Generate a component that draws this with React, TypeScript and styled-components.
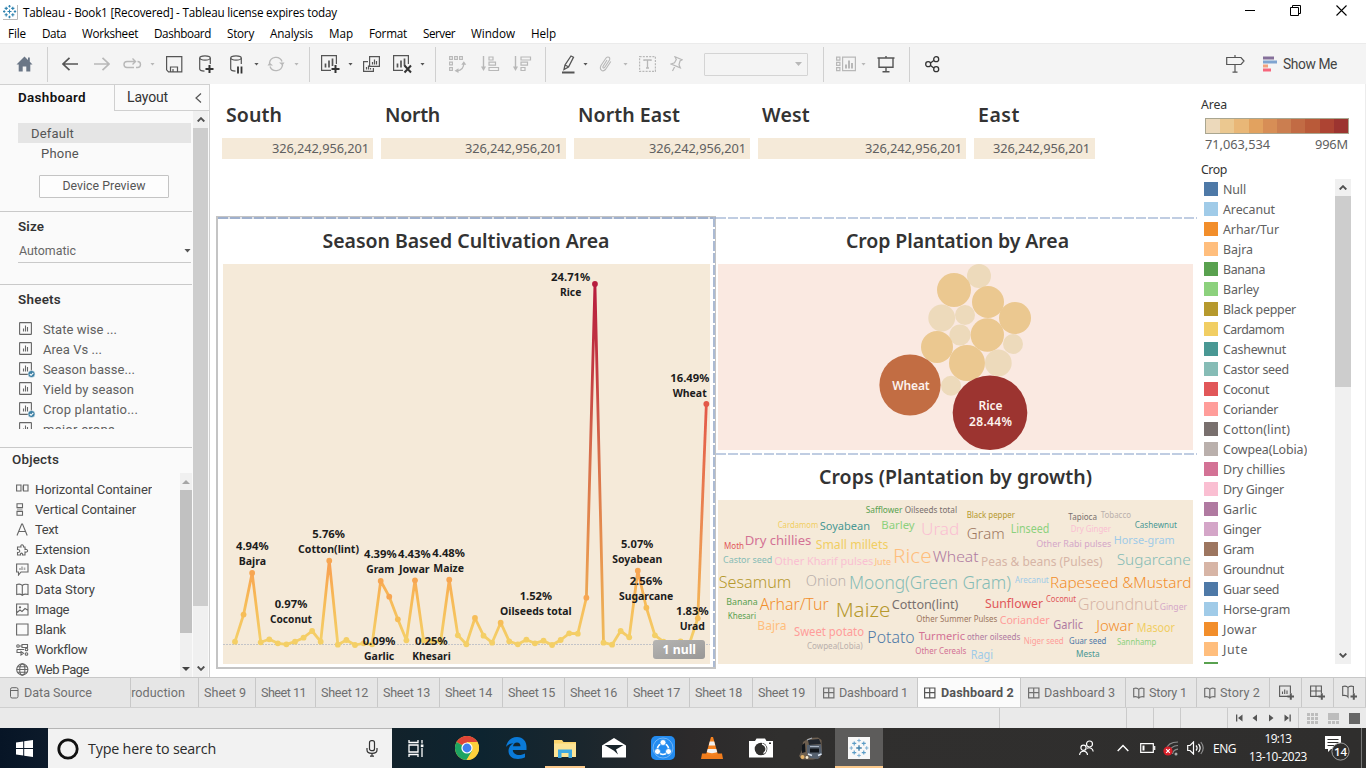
import React, { useLayoutEffect, useRef, useState } from 'react';
import styled, { createGlobalStyle } from 'styled-components';

const winFont = `"Open Sans", "Noto Sans", sans-serif`;
const uiFont = `Roboto, "Noto Sans", sans-serif`;
const vizFont = `"Noto Sans", "Open Sans", sans-serif`;

const GlobalStyle = createGlobalStyle`
  * { box-sizing: border-box; }
  html, body { margin: 0; padding: 0; overflow: hidden; background: #fff; }
  svg { display: block; flex: none; }
`;

/* ---------- text that keeps a fixed advance width ---------- */
const Run = styled.span`
  display: inline-block;
  white-space: pre;
  flex: none;
`;

function Fit({ w, children }: { w: number; children: string }) {
  const ref = useRef<HTMLSpanElement>(null);
  const [spacing, setSpacing] = useState(0);
  useLayoutEffect(() => {
    const el = ref.current;
    if (!el) return;
    const natural = el.getBoundingClientRect().width;
    setSpacing((w - natural) / children.length);
  }, [w, children]);
  return (
    <Run ref={ref} style={{ letterSpacing: `${spacing}px` }}>
      {children}
    </Run>
  );
}

/* ---------- window frame ---------- */
const Page = styled.div`
  width: 1366px;
  height: 768px;
  display: flex;
  flex-direction: column;
  overflow: hidden;
  background: #fff;
  font-family: ${uiFont};
  color: #333;
`;

const TitleBar = styled.header`
  height: 24px;
  flex: none;
  display: flex;
  align-items: center;
  padding-left: 3px;
  font: 11.7px/24px ${winFont};
  color: #000;
`;
const TitleText = styled.div`
  margin-left: 5px;
  flex: 1;
`;
const WindowButtons = styled.div`
  display: flex;
  gap: 34.5px;
  margin-right: 19.5px;
  margin-top: -4px;
`;
const MenuBar = styled.nav`
  height: 19px;
  flex: none;
  display: flex;
  gap: 16px;
  padding-left: 8px;
  font: 11.7px/19px ${winFont};
  color: #000;
`;

/* ---------- toolbar ---------- */
const Toolbar = styled.div`
  height: 41px;
  flex: none;
  display: flex;
  align-items: center;
  background: #f4f4f4;
  border-top: 1px solid #ebebeb;
`;
const Tool = styled.div<{ $ml?: number; $w: number; $dim?: boolean }>`
  margin-left: ${(p) => p.$ml ?? 0}px;
  width: ${(p) => p.$w}px;
  height: 20px;
  flex: none;
  display: flex;
  align-items: center;
  color: ${(p) => (p.$dim ? '#b8b8b8' : '#555')};
`;
const ToolCaret = styled.i<{ $ml: number; $dim?: boolean; $big?: boolean }>`
  margin-left: ${(p) => p.$ml}px;
  width: ${(p) => (p.$big ? 7 : 5)}px;
  height: ${(p) => (p.$big ? 4 : 3)}px;
  flex: none;
  background: ${(p) => (p.$dim ? '#b8b8b8' : '#555')};
  clip-path: polygon(0 0, 100% 0, 50% 100%);
`;
const ToolRule = styled.i<{ $ml: number }>`
  margin-left: ${(p) => p.$ml}px;
  width: 1px;
  height: 35px;
  flex: none;
  background: #d0d0d0;
`;
const ToolSelect = styled.div`
  margin-left: 21px;
  width: 104px;
  height: 23px;
  flex: none;
  border: 1px solid #d4d4d4;
  border-radius: 1px;
  display: flex;
  align-items: center;
`;
const ShowMe = styled.div`
  margin-left: 18px;
  display: flex;
  align-items: center;
  gap: 6px;
  font: 13.8px/20px ${uiFont};
  color: #444;
`;

/* ---------- sidebar ---------- */
const Body = styled.div`
  height: 593px;
  flex: none;
  display: flex;
`;
const Sidebar = styled.aside`
  width: 210px;
  flex: none;
  display: flex;
  flex-direction: column;
  background: #fafafa;
  border-top: 1px solid #d0d0d0;
  border-right: 1px solid #d0d0d0;
`;
const PaneTabs = styled.div`
  height: 26px;
  flex: none;
  display: flex;
  font-size: 14px;
  line-height: 25px;
`;
const PaneTabActive = styled.div`
  width: 114px;
  padding-left: 18px;
  font-weight: 600;
  font-size: 13.4px;
  color: #111;
`;
const PaneTab = styled.div`
  flex: 1;
  display: flex;
  align-items: center;
  justify-content: space-between;
  padding: 0 7px 0 12px;
  border-left: 1px solid #d0d0d0;
  border-bottom: 1px solid #d0d0d0;
`;
const PaneRow = styled.div`
  flex: 1;
  min-height: 0;
  display: flex;
`;
const Pane = styled.div`
  width: 192px;
  margin-right: 1px;
  display: flex;
  flex-direction: column;
  font-size: 13px;
  color: #555;
`;
const Section = styled.section<{ $h: number }>`
  height: ${(p) => p.$h}px;
  flex: none;
  padding-left: 18px;
  border-bottom: 1px solid #c9c9c9;
  overflow: hidden;
`;
const DeviceItem = styled.div<{ $on?: boolean }>`
  width: 173px;
  height: 20px;
  line-height: 21px;
  margin-top: ${(p) => (p.$on ? 12 : 0)}px;
  padding-left: ${(p) => (p.$on ? 13 : 23)}px;
  background: ${(p) => (p.$on ? '#e5e5e5' : 'transparent')};
`;
const PreviewButton = styled.div`
  width: 130px;
  height: 23px;
  margin: 12px 0 0 21px;
  border: 1px solid #c4c4c4;
  border-radius: 1px;
  background: #fdfdfd;
  text-align: center;
  font-size: 12.3px;
  line-height: 21px;
`;
const Heading = styled.h3<{ $plain?: boolean }>`
  margin: 0;
  font-size: 13.4px;
  font-weight: ${(p) => (p.$plain ? 500 : 600)};
  line-height: 30px;
  color: #333;
`;
const SizeSelect = styled.div`
  width: 173px;
  height: 21px;
  display: flex;
  align-items: center;
  justify-content: space-between;
  padding-left: 1px;
  padding-bottom: 3px;
  border-bottom: 1px solid #c9c9c9;
  font-size: 12.4px;
  color: #666;
`;
const SheetItem = styled.div`
  height: 20px;
  display: flex;
  align-items: center;
  gap: 7px;
  font-size: 13px;
  color: #606060;
`;
const SheetClip = styled.div`
  height: 110px;
  margin-top: 4px;
  overflow: hidden;
`;
const ObjectsHead = styled.div`
  height: 25px;
  flex: none;
  padding-left: 12px;
  margin-top: -3px;
  margin-bottom: 3px;
`;
const ObjectsSection = styled.section`
  flex: 1;
  min-height: 0;
  display: flex;
  flex-direction: column;
`;
const ObjectsBody = styled.div`
  flex: 1;
  min-height: 0;
  display: flex;
  justify-content: space-between;
`;
const ObjectList = styled.div`
  padding: 6px 0 0 15px;
  overflow: hidden;
  color: #444;
`;
const ObjectItem = styled.div`
  height: 20px;
  display: flex;
  align-items: center;
  gap: 6px;
  font-size: 13px;
`;
const Track = styled.div<{ $w: number }>`
  width: ${(p) => p.$w}px;
  flex: none;
  display: flex;
  flex-direction: column;
  align-items: center;
  background: #f0f0f0;
`;
const Thumb = styled.div<{ $h: number; $c?: string }>`
  width: 100%;
  height: ${(p) => p.$h}px;
  flex: none;
  background: ${(p) => p.$c ?? '#cdcdcd'};
`;
const TrackEnd = styled.div<{ $last?: boolean }>`
  width: 100%;
  height: 17px;
  flex: none;
  margin-top: ${(p) => (p.$last ? 'auto' : 0)};
  display: flex;
  align-items: center;
  justify-content: center;
`;

/* ---------- dashboard ---------- */
const Canvas = styled.main`
  width: 987px;
  flex: none;
  display: flex;
  flex-direction: column;
`;
const Regions = styled.div`
  height: 132px;
  flex: none;
  display: flex;
  gap: 8px;
  padding-left: 12px;
`;
const Region = styled.section<{ $w: number }>`
  width: ${(p) => p.$w}px;
  flex: none;
`;
const VizTitle = styled.h2`
  margin: 0;
  font: 600 19.5px/30px ${vizFont};
  color: #333;
`;
const RegionTitle = styled(VizTitle)`
  height: 54px;
  padding: 16px 0 0 4px;
`;
const RegionValue = styled.div<{ $pr: number }>`
  height: 21px;
  background: #f5ead9;
  padding-right: ${(p) => p.$pr}px;
  text-align: right;
  font: 12.8px/21px ${vizFont};
  color: #606060;
`;
const Zones = styled.div`
  display: flex;
  padding-left: 6px;
`;
const SelectedZone = styled.section`
  position: relative;
  width: 500px;
  height: 453px;
  flex: none;
  border: 2px solid #c4c4c4;
  padding-left: 5px;
`;
const GuideTop = styled.i`
  position: absolute;
  left: 0;
  right: -2px;
  top: -1px;
  height: 2px;
  background: repeating-linear-gradient(90deg, #9fb0cd 0 10px, #dfe3ea 10px 12px);
`;
const GuideSide = styled.i`
  position: absolute;
  right: -1px;
  top: -1px;
  bottom: 0;
  width: 2px;
  background: repeating-linear-gradient(180deg, #abbad3 0 10px, #fff 10px 12px);
`;
const ZoneTitle = styled(VizTitle)<{ $h: number; $pr?: number; $pl?: number }>`
  height: ${(p) => p.$h}px;
  padding: 0 ${(p) => p.$pr ?? 0}px 0 ${(p) => p.$pl ?? 0}px;
  text-align: center;
  line-height: ${(p) => (p.$h === 46 ? 45 : 43)}px;
`;
const ZoneColumn = styled.div`
  width: 481px;
  padding-top: 1px;
`;
const DashRule = styled.div`
  height: 2px;
  background: repeating-linear-gradient(90deg, #c0cde2 0 10px, #fff 10px 12px);
`;
const Panel = styled.div<{ $bg: string; $h: number; $mb?: number }>`
  width: 475px;
  height: ${(p) => p.$h}px;
  margin: 0 0 ${(p) => p.$mb ?? 0}px 2px;
  background: ${(p) => p.$bg};
`;

/* ---------- legends ---------- */
const Legends = styled.aside`
  width: 169px;
  flex: none;
  padding: 11px 0 13px 4px;
  border-right: 1px solid #ececec;
  display: flex;
  flex-direction: column;
  font-family: ${vizFont};
  color: #606060;
`;
const LegendTitle = styled.div`
  font-size: 12.3px;
  line-height: 20px;
  height: 23px;
  color: #333;
`;
const Ramp = styled.div`
  width: 144px;
  height: 16px;
  margin-left: 4px;
  border: 1px solid #a9a690;
  display: flex;
  flex: none;
`;
const RampStep = styled.i<{ $c: string }>`
  flex: 1;
  background: ${(p) => p.$c};
`;
const RampEnds = styled.div`
  width: 143px;
  margin: 0 0 6px 4px;
  display: flex;
  justify-content: space-between;
  font-size: 12.8px;
  line-height: 20px;
`;
const CropLegend = styled.div`
  height: 485px;
  margin-top: -4px;
  display: flex;
  justify-content: space-between;
  padding-right: 14px;
  flex: none;
`;
const CropList = styled.div`
  overflow: hidden;
  padding-left: 3px;
`;
const CropItem = styled.div`
  height: 20px;
  display: flex;
  align-items: center;
  gap: 5px;
  font-size: 12.4px;
`;
const Swatch = styled.i<{ $c: string }>`
  width: 14px;
  height: 14px;
  background: ${(p) => p.$c};
`;

/* ---------- sheet tabs and status bar ---------- */
const SheetTabs = styled.div`
  height: 31px;
  flex: none;
  display: flex;
  background: #e6e6e6;
  border-top: 1px solid #c8c8c8;
  border-bottom: 1px solid #cfcfcf;
`;
const SheetTab = styled.div<{ $w: number; $on?: boolean; $pl?: number; $gap?: number }>`
  width: ${(p) => p.$w}px;
  flex: none;
  overflow: hidden;
  display: flex;
  align-items: center;
  gap: ${(p) => p.$gap ?? 5}px;
  padding-left: ${(p) => p.$pl ?? 5}px;
  border-right: 1px solid #c8c8c8;
  background: ${(p) => (p.$on ? '#fbfbfb' : 'transparent')};
  font-size: 12.6px;
  font-weight: ${(p) => (p.$on ? 700 : 400)};
  color: ${(p) => (p.$on ? '#555' : '#707070')};
`;
const Clipped = styled.div`
  margin-left: -7px;
`;
const StatusBar = styled.div`
  height: 20px;
  flex: none;
  display: flex;
  justify-content: flex-end;
  background: #eaeaea;
`;
const StatusCell = styled.div<{ $w: number; $pl?: number; $gap?: number }>`
  width: ${(p) => p.$w}px;
  padding-left: ${(p) => p.$pl ?? 0}px;
  border-left: 1px solid #cbcbcb;
  display: flex;
  align-items: center;
  gap: ${(p) => p.$gap ?? 0}px;
`;

/* ---------- taskbar ---------- */
const Taskbar = styled.footer`
  height: 40px;
  flex: none;
  display: flex;
  background: linear-gradient(90deg, #071526 0, #0c1a2a 48px, #12222b 392px, #0d2430 480px, #1a262d 580px, #2c2a2b 690px, #302f2e 780px, #2f2e2d 100%);
  color: #fff;
  font-family: ${winFont};
`;
const StartButton = styled.div`
  width: 48px;
  display: flex;
  align-items: center;
  justify-content: center;
`;
const SearchBox = styled.div`
  width: 344px;
  display: flex;
  align-items: center;
  padding: 0 14px 0 9px;
  background: #f2f2f2;
  border-top: 1px solid #b5b5b5;
  color: #2b2b2b;
  font-size: 14.3px;
`;
const SearchText = styled.div`
  margin-left: 9px;
  flex: 1;
`;
const TaskButton = styled.div<{ $w?: number; $on?: boolean; $open?: boolean }>`
  width: ${(p) => p.$w ?? 49}px;
  flex: none;
  display: flex;
  align-items: center;
  justify-content: center;
  background: ${(p) => (p.$on ? '#5d5c5b' : 'transparent')};
  box-shadow: ${(p) => (p.$on ? 'inset 0 -2px #fbc98b' : 'none')};
  ${(p) =>
    p.$open &&
    `background: linear-gradient(#fbc98b, #fbc98b) center bottom / 40px 2px no-repeat;`}
`;
const Tray = styled.div`
  margin-left: auto;
  display: flex;
  align-items: center;
  font-size: 12px;
`;
const TrayItem = styled.div<{ $ml: number; $w: number }>`
  margin-left: ${(p) => p.$ml}px;
  width: ${(p) => p.$w}px;
`;
const Clock = styled.div`
  width: 58px;
  margin-left: 13px;
  display: flex;
  flex-direction: column;
  align-items: center;
  font-size: 11.8px;
  line-height: 18px;
  padding-bottom: 2px;
`;
const DesktopEdge = styled.i`
  width: 5px;
  height: 40px;
  margin-left: 11px;
  border-left: 1px solid #777;
`;

/* ---------- icons ---------- */
const Svg = ({ w, h, children }: { w: number; h: number; children: React.ReactNode }) => (
  <svg width={w} height={h} viewBox={`0 0 ${w} ${h}`} fill="none" stroke="currentColor" strokeWidth="1.2">
    {children}
  </svg>
);

const plus = (x: number, y: number, r: number) => `M${x - r} ${y}h${2 * r}M${x} ${y - r}v${2 * r}`;

const TableauMark = ({ size }: { size: number }) => (
  <svg width={size} height={size} viewBox="0 0 24 24" fill="none">
    <rect width="24" height="24" fill="#f8f8f8" />
    <path d={plus(12, 12, 3)} stroke="#3f7fa8" strokeWidth="1.5" />
    <path d={plus(6.8, 7, 2.2) + plus(17.2, 7, 2.2) + plus(6.8, 17, 2.2) + plus(17.2, 17, 2.2)} stroke="#5b9cc6" strokeWidth="1.2" />
    <path d={plus(12, 3.8, 1.9) + plus(12, 20.2, 1.9) + plus(3.6, 12, 1.9) + plus(20.4, 12, 1.9)} stroke="#7fb0d2" strokeWidth="1.1" />
  </svg>
);

const TitleMark = () => (
  <svg width="15" height="15" viewBox="0 0 15 15" fill="none">
    <path d="M14.5 0v14.5H0" stroke="#b9b9b9" />
    <path
      d={plus(6.5, 6.5, 2) + plus(3.2, 3.4, 1.6) + plus(9.8, 3.4, 1.6) + plus(3.2, 9.8, 1.6) + plus(9.8, 9.8, 1.6) + plus(6.5, 1.2, 1.2) + plus(6.5, 12, 1.2) + plus(1.2, 6.5, 1.2) + plus(12, 6.5, 1.2)}
      stroke="#2f83b0"
      strokeWidth="1.1"
    />
  </svg>
);

const HomeIcon = () => (
  <svg width="17" height="16" viewBox="0 0 17 16">
    <path d="M8.500 0.500L0.500 8.500H2.700V15.500H6.700V10.500H10.300V15.500H14.300V8.500H16.500L13.800 5.700V1.500H12V4Z" fill="#6a7686" />
  </svg>
);
const Arrow = ({ flip }: { flip?: boolean }) => (
  <svg width="16" height="14" viewBox="0 0 16 14" fill="none" stroke="currentColor" strokeWidth="1.700">
    <path d={flip ? 'M0 7H14.500M8.500 0.800L15 7L8.500 13.200' : 'M16 7H1.500M7.500 0.800L1 7L7.500 13.200'} />
  </svg>
);
const RedoIcon = () => (
  <Svg w={19} h={12}>
    <path d="M11 9.500H4A3 3 0 0 1 4 3.500H12.500M9.500 0.500L12.500 3.500L9.500 6.500M14.500 3.500A3 3 0 0 1 14.500 9.500H13" strokeWidth="1.400" />
  </Svg>
);
const SaveIcon = () => (
  <Svg w={17} h={17}>
    <path d="M0.600 0.600H15.800V15.800H2.500L0.600 13.800ZM4.500 15.800V11H11.500V15.800M7 15.500V13" />
  </Svg>
);
const DbIcon = ({ mode }: { mode: 'plus' | 'pause' }) => (
  <Svg w={16} h={19}>
    <ellipse cx="6" cy="3" rx="5.300" ry="2.200" />
    <path d="M0.700 3V14C0.700 15.200 3 16 5.500 16.200M11.300 3V9" />
    {mode === 'plus' ? <path d="M6.500 14H14.500M10.500 10V18" stroke="#333" strokeWidth="2" /> : <path d="M8 11.500V18.500M11.500 11.500V18.500" stroke="#333" strokeWidth="1.800" />}
  </Svg>
);
const RefreshIcon = () => (
  <Svg w={18} h={16}>
    <path d="M2.500 7A6.500 6.500 0 0 1 15 5.500M15.500 9A6.500 6.500 0 0 1 3 10.500" strokeWidth="1.400" />
    <path d="M12 6.500H17.500L15.500 9.500ZM0.500 9.500H6L2.500 6.500Z" fill="currentColor" stroke="none" />
  </Svg>
);
const SheetIcon = ({ mark }: { mark: 'plus' | 'clear' }) => (
  <Svg w={20} h={19}>
    <path d="M10 15.400H0.600V0.600H15.400V9" />
    <path d="M4.500 12.500V8.500M8 12.500V5.500M11.500 11V3.500" strokeWidth="1.700" />
    {mark === 'plus' ? <path d="M10.500 14H18.500M14.500 10V18" stroke="#333" strokeWidth="2" /> : <path d="M11.500 10.500L18 17.500M18 10.500L11.500 17.500" stroke="#333" strokeWidth="2" />}
  </Svg>
);
const DuplicateIcon = () => (
  <Svg w={18} h={17}>
    <path d="M6.600 0.600H16.400V10.400H6.600ZM9.500 8.500V6M11.500 8.500V3.500M13.500 8.500V5" />
    <path d="M5 5.600H0.600V15.400H10.400V12M3.500 13.500V11M5.500 13.500V9.500M7.500 13.500V12" />
  </Svg>
);
const SwapIcon = () => (
  <Svg w={18} h={17}>
    <path d="M0.600 0.600H3.400V3.400H0.600ZM5.600 0.600H8.400V3.400H5.600ZM10.600 0.600H13.400V3.400H10.600ZM0.600 6.100H3.400V8.900H0.600ZM0.600 11.600H3.400V14.400H0.600Z" strokeWidth="1.100" />
    <path d="M14.800 7C14.800 12 12 14.500 8 14.800" strokeWidth="1.300" />
    <path d="M12.300 8.800L14.800 5.200L17.300 8.800ZM9.500 12.200L5.500 14.800L9.500 17Z" fill="currentColor" stroke="none" />
  </Svg>
);
const SortIcon = ({ desc }: { desc?: boolean }) => (
  <Svg w={19} h={16}>
    <path d="M2.500 0V12" strokeWidth="1.400" />
    <path d="M0 10.500H5L2.500 15Z" fill="currentColor" stroke="none" />
    <path d={desc ? 'M8 1H17.500V4H8ZM8 6.200H14.500V9.200H8ZM8 11.500H12V14.500H8Z' : 'M8 1H12V4H8ZM8 6.200H14.500V9.200H8ZM8 11.500H17.500V14.500H8Z'} />
  </Svg>
);
const PenIcon = () => (
  <Svg w={13} h={19}>
    <path d="M9 1L11.500 2.200L6.500 12L2 14.500L3 10ZM3.500 10.200L6.300 11.700" strokeWidth="1.300" />
    <path d="M0 17.500H12.500" strokeWidth="2" />
  </Svg>
);
const ClipIcon = () => (
  <Svg w={13} h={16}>
    <path d="M8 4L4 10.500C3.300 12 5 12.600 5.800 11.300L10.500 4C11.500 1.500 9 0 7.200 1.800L2 9.500C0 13.500 3.500 16.500 6.500 13.500L11.800 5.500" strokeWidth="1.100" />
  </Svg>
);
const TextBoxIcon = () => (
  <Svg w={17} h={16}>
    <path d="M0.600 0.600H16.400V15.400H0.600Z" strokeDasharray="2 1.200" />
    <path d="M5 5V4H12V5M8.500 4V12M7 12H10" strokeWidth="1.300" />
  </Svg>
);
const PinIcon = () => (
  <Svg w={13} h={16}>
    <path d="M5 0.800L12 3.800L10 5L9 8.800L10.300 11.800L1 8L4.500 6.800L6.300 3.500ZM5.200 9.800L2.500 15" />
  </Svg>
);
const FitIcon = () => (
  <Svg w={21} h={16}>
    <path d="M0.600 1.100H3.900V4.100H0.600ZM0.600 6.400H3.900V9.400H0.600ZM0.600 11.700H3.900V14.700H0.600ZM6.600 1.100H19.400V14.700H6.600Z" />
    <path d="M10 12.500V8.500M13 12.500V4.500M16 12.500V7" strokeWidth="2" />
  </Svg>
);
const PresentIcon = () => (
  <Svg w={18} h={17}>
    <path d="M0.500 2H17.500M2 2V11.300H16V2M9 0V2M9 11.300V15.500M5.500 15.700H12.500" strokeWidth="1.400" />
  </Svg>
);
const ShareIcon = () => (
  <Svg w={15} h={17}>
    <path d="M5.500 7L8.800 4.500M5.500 9.500L8.800 12" stroke="#333" strokeWidth="1.300" />
    <circle cx="3.200" cy="8.200" r="2.500" stroke="#333" strokeWidth="1.300" />
    <circle cx="11.200" cy="3.200" r="2.500" stroke="#333" strokeWidth="1.300" />
    <circle cx="11.200" cy="13.200" r="2.500" stroke="#333" strokeWidth="1.300" />
  </Svg>
);
const GuideIcon = () => (
  <Svg w={19} h={18}>
    <path d="M0.700 2.500H15L18 6L15 9.500H0.700ZM9 0V2.500M9 9.500V17M6.500 17.200H11.500" />
  </Svg>
);
const ShowMeIcon = () => (
  <svg width="14" height="16" viewBox="0 0 14 16">
    <rect y="0.500" width="11" height="3" fill="#85709a" />
    <rect y="4.500" width="14" height="3" fill="#7fa4d0" />
    <rect y="8.500" width="5" height="3" fill="#f2a27e" />
    <rect y="12.500" width="8" height="3" fill="#f7667c" />
  </svg>
);
const Chevron = ({ d, w = 8, h = 5 }: { d: string; w?: number; h?: number }) => (
  <svg width={w} height={h} viewBox={`0 0 ${w} ${h}`} fill="none" stroke="#505050" strokeWidth="1.900">
    <path d={d} />
  </svg>
);
const UpChevron = () => <Chevron d="M0.700 4.500L4 1.200L7.300 4.500" />;
const DownChevron = () => <Chevron d="M0.700 0.500L4 3.800L7.300 0.500" />;

const WorksheetIcon = ({ used }: { used?: boolean }) => (
  <svg width="18" height="17" viewBox="0 0 18 17" fill="none" stroke="#666" strokeWidth="1.100">
    <rect x="1.600" y="1.600" width="11.800" height="11.800" rx="0.500" />
    <path d="M5.500 10.500V7.500M7.500 10.500V4.500M9.500 10.500V6" />
    {used && (
      <>
        <circle cx="13.500" cy="13" r="3.600" fill="#3d80a4" stroke="#fafafa" strokeWidth="0.600" />
        <path d="M11.800 13L13.100 14.300L15.300 11.900" stroke="#fff" />
      </>
    )}
  </svg>
);

const objectPaths: Record<string, React.ReactNode> = {
  'Horizontal Container': <><path d="M0.600 2H5V8H0.600ZM7.500 2H12V8H7.500Z" /><path d="M5.500 2.500H7V7.500H5.500Z" fill="#bbb" stroke="none" /></>,
  'Vertical Container': <><path d="M1 0.800H6.500V4.600H1ZM1 8.400H6.500V12.200H1Z" /><path d="M1 5.200H6.500V7.800H1Z" fill="#bbb" stroke="none" /></>,
  Text: <path d="M1 12.500L5.700 1H6.500L11.200 12.500M2.800 8.500H9.400" />,
  Extension: <path d="M4 4H5C4 1 8 1 7.500 4H9V6.500C12.500 5.500 12.500 10 9 9V12H6.500C7 9.500 4 9.500 4.500 12H1.500V9.500C4.500 10 4.500 6 1.500 6.500V4Z" />,
  'Ask Data': <><path d="M0.600 1H12V9H5L2.500 12V9H0.600Z" /><path d="M4 7V5M6 7V3.500M8.500 7V4.500" stroke="#aaa" strokeWidth="1.700" /></>,
  'Data Story': <path d="M6.300 2.500C5 1 2.500 1 0.700 1.500V11.500C2.500 11 5 11 6.300 12.300C7.700 11 10 11 12 11.500V1.500C10 1 7.700 1 6.300 2.500V12" />,
  Image: <><path d="M0.600 1H12V12H0.600ZM1 9.500L4 7L6 8.500L9 5.500L11.500 7" /><circle cx="4" cy="4.300" r="0.600" /></>,
  Blank: <path d="M0.600 1H12V12H0.600Z" />,
  Workflow: <><circle cx="2" cy="3" r="1.300" /><path d="M3.500 3H6M6 1.500H11.500V4.500H6ZM1 6.500H8M1 6.500V9.500H5" /><circle cx="10.500" cy="6.500" r="1.300" /><circle cx="10.500" cy="11" r="1.300" /><path d="M5 8.500V12L7.500 10.300Z" /></>,
  'Web Page': <><circle cx="6.300" cy="6.500" r="5.600" /><ellipse cx="6.300" cy="6.500" rx="2.600" ry="5.600" /><path d="M0.700 6.500H12M1.500 3.800H11.200M1.500 9.200H11.200" /></>,
};

const ColumnsIcon = () => (
  <Svg w={12} h={12}><path d="M0.600 1H10.900V10.800H0.600ZM5.700 1V10.800M0.600 5.700H10.900" /></Svg>
);
const BookIcon = () => (
  <Svg w={12} h={12}><path d="M5.800 2.500C4.800 1.200 2.500 1 0.700 1.500V9.800C2.500 9.500 4.800 9.800 5.800 11C6.800 9.800 9 9.500 10.900 9.800V1.500C9 1 6.800 1.200 5.800 2.500V11" /></Svg>
);
const NewTabIcon = ({ d }: { d: string }) => (
  <svg width="16" height="16" viewBox="0 0 16 16" fill="none" stroke="#5a5a5a" strokeWidth="1.100">
    <path d={d} />
    <path d="M8.500 11.500H15M11.800 8.200V14.800" strokeWidth="2" />
  </svg>
);

/* ---------- data ---------- */
const menus: [string, number][] = [['File', 18], ['Data', 24], ['Worksheet', 56], ['Dashboard', 57], ['Story', 27], ['Analysis', 43], ['Map', 24], ['Format', 38], ['Server', 32], ['Window', 44], ['Help', 25]];

const sheets: [string, number, boolean][] = [['State wise ...', 74, false], ['Area Vs ...', 59, false], ['Season basse...', 92, true], ['Yield by season', 91, false], ['Crop plantatio...', 95, true], ['major crops', 72, false]];

const objects: [string, number][] = [['Horizontal Container', 117], ['Vertical Container', 101], ['Text', 23], ['Extension', 55], ['Ask Data', 50], ['Data Story', 60], ['Image', 34], ['Blank', 31], ['Workflow', 52], ['Web Page', 54]];

const regions: [string, number, number][] = [['South', 151, 56], ['North', 185, 55], ['North East', 176, 102], ['West', 208, 48], ['East', 121, 42]];

const ramp = ['#ecd9bb', '#ebc890', '#e9b777', '#e2a25f', '#d78e56', '#cb7e50', '#c26b44', '#b95a39', '#ad4433', '#9c3430'];

const crops: [string, string, number][] = [
  ['Null', '#4e79a7', 23], ['Arecanut', '#a0cbe8', 52], ['Arhar/Tur', '#f28e2b', 56], ['Bajra', '#ffbe7d', 30],
  ['Banana', '#59a14f', 42], ['Barley', '#8cd17d', 36], ['Black pepper', '#b6992d', 73], ['Cardamom', '#f1ce63', 61],
  ['Cashewnut', '#499894', 63], ['Castor seed', '#86bcb6', 66], ['Coconut', '#e15759', 46], ['Coriander', '#ff9d9a', 55],
  ['Cotton(lint)', '#79706e', 67], ['Cowpea(Lobia)', '#bab0ac', 84], ['Dry chillies', '#d37295', 62], ['Dry Ginger', '#fabfd2', 61],
  ['Garlic', '#b07aa1', 34], ['Ginger', '#d4a6c8', 38], ['Gram', '#9d7660', 31], ['Groundnut', '#d7b5a6', 61],
  ['Guar seed', '#4e79a7', 56], ['Horse-gram', '#a0cbe8', 67], ['Jowar', '#f28e2b', 34], ['Jute', '#ffbe7d', 25], ['Khesari', '#59a14f', 45],
];

const seasonY = [
  641.7, 614.6, 573, 642.3, 639.3, 643.3, 644.3, 641.7, 637.7, 631, 641.7, 560.7, 644.7, 640, 645, 643.3, 644.3, 581, 596.7, 619.3,
  640.3, 580.3, 640.3, 641, 641.7, 579.7, 635.3, 644.3, 618, 635.7, 642.7, 622.7, 641.3, 644.3, 639.7, 643.3, 640.7, 645, 640, 633.3,
  633.7, 597.7, 284, 642.7, 644.7, 631, 637.3, 570.7, 607.7, 635.3, 641.7, 644.3, 641.3, 644.3, 618.3, 404,
];
const seasonPoints = seasonY.map((y, i) => [235 + i * 8.57, y] as const);

const seasonLabels: [string, number, number, number][] = [
  ['24.71%', 551, 590.3, 281], ['Rice', 560, 581.3, 296], ['16.49%', 670.3, 709.3, 381.7], ['Wheat', 672.7, 706.7, 397],
  ['4.94%', 236, 268.7, 550], ['Bajra', 238.7, 266, 565], ['0.97%', 274.7, 307.3, 607.7], ['Coconut', 270, 312, 623],
  ['5.76%', 312.3, 345, 537.7], ['Cotton(lint)', 298, 359, 553], ['4.39%', 364, 396.7, 558], ['Gram', 366.3, 394.3, 573],
  ['4.43%', 398, 430.7, 558], ['Jowar', 399, 429.7, 573], ['4.48%', 432.3, 465, 556.7], ['Maize', 433.3, 464, 571.7],
  ['0.09%', 362.7, 395.3, 644.7], ['Garlic', 364, 394.3, 660], ['0.25%', 415, 447.7, 644.7], ['Khesari', 412.3, 450.7, 660],
  ['1.52%', 519.7, 552, 599.7], ['Oilseeds total', 500, 571.7, 614.7], ['5.07%', 621, 653.3, 547.7], ['Soyabean', 612.3, 662.3, 563],
  ['2.56%', 629.7, 662.3, 584.7], ['Sugarcane', 619, 673.3, 600], ['1.83%', 676, 708.7, 614.7], ['Urad', 679.7, 705, 630],
];

const LIGHT = '#eddabb';
const MID = '#ebc890';
const bubbles: [number, number, number, string][] = [
  [979, 276, 12, LIGHT], [954, 290, 17, MID], [988, 302, 16, MID], [1015, 318, 16, MID], [941.7, 318, 13.4, LIGHT],
  [965, 315, 10, LIGHT], [960, 335, 10.6, LIGHT], [987.3, 335, 16.7, MID], [1013, 344, 10, LIGHT], [937, 347, 16, MID],
  [967, 363, 18, MID], [998.3, 363, 13.4, LIGHT], [951, 385.7, 10, LIGHT], [910, 385, 30.6, '#c26d43'], [990, 412.7, 37.3, '#9c3430'],
];

/* text, left, right, baseline, size, colour - on a grid of three units per pixel */
const words: [string, number, number, number, number, string][] = [
  ['Safflower', 452, 562, 173, 24, '#59a14f'], ['Oilseeds total', 569, 726, 173, 24, '#79706e'], ['Black pepper', 755, 900, 189, 24, '#b6992d'],
  ['Tapioca', 1060, 1146, 194, 24, '#79706e'], ['Tobacco', 1157, 1248, 188, 24, '#bab0ac'], ['Cardamom', 188, 310, 218, 24, '#f1ce63'],
  ['Soyabean', 314, 465, 224, 34, '#499894'], ['Barley', 499, 599, 221, 34, '#8cd17d'], ['Urad', 618, 733, 239, 50, '#fabfd2'],
  ['Gram', 755, 869, 253, 44, '#9d7660'], ['Linseed', 887, 1003, 233, 36, '#8cd17d'], ['Dry Ginger', 1067, 1188, 231, 26, '#fabfd2'],
  ['Cashewnut', 1259, 1386, 219, 25, '#499894'], ['Dry chillies', 89, 289, 270, 39, '#d37295'], ['Moth', 27, 87, 282, 25, '#e15759'],
  ['Small millets', 302, 520, 281, 38, '#f1ce63'], ['Other Rabi pulses', 964, 1189, 275, 29, '#d4a6c8'], ['Horse-gram', 1196, 1379, 267, 35, '#a0cbe8'],
  ['Castor seed', 24, 172, 323, 28, '#86bcb6'], ['Other Kharif pulses', 178, 475, 330, 34, '#fabfd2'], ['Jute', 479, 528, 330, 27, '#ffbe7d'],
  ['Rice', 534, 650, 324, 60, '#ffbe7d'], ['Wheat', 653, 791, 320, 46, '#b07aa1'], ['Peas & beans (Pulses)', 798, 1163, 333, 38, '#d7b5a6'],
  ['Sugarcane', 1205, 1427, 330, 46, '#86bcb6'], ['Sesamum', 11, 229, 399, 47, '#b6992d'], ['Onion', 272, 394, 392, 45, '#bab0ac'],
  ['Moong(Green Gram)', 402, 888, 402, 52, '#86bcb6'], ['Arecanut', 900, 1001, 383, 24, '#a0cbe8'], ['Rapeseed &Mustard', 1005, 1429, 399, 46, '#f28e2b'],
  ['Banana', 34, 128, 450, 28, '#59a14f'], ['Arhar/Tur', 134, 341, 465, 47, '#f28e2b'], ['Maize', 362, 526, 486, 62, '#b6992d'],
  ['Cotton(lint)', 530, 730, 462, 38, '#79706e'], ['Sunflower', 810, 984, 459, 38, '#e15759'], ['Coconut', 993, 1083, 440, 24, '#e15759'],
  ['Groundnut', 1088, 1332, 466, 50, '#d7b5a6'], ['Ginger', 1334, 1416, 464, 28, '#d4a6c8'], ['Khesari', 38, 123, 491, 25, '#59a14f'],
  ['Bajra', 127, 215, 524, 37, '#ffbe7d'], ['Sweet potato', 237, 447, 543, 36, '#ff9d9a'], ['Cowpea(Lobia)', 276, 443, 581, 26, '#bab0ac'],
  ['Other Summer Pulses', 604, 847, 501, 26, '#9d7660'], ['Coriander', 854, 1004, 507, 35, '#ff9d9a'], ['Garlic', 1015, 1104, 521, 36, '#b07aa1'],
  ['Jowar', 1144, 1255, 528, 42, '#f28e2b'], ['Masoor', 1265, 1380, 530, 36, '#f1ce63'], ['Potato', 457, 599, 564, 47, '#4e79a7'],
  ['Turmeric', 611, 750, 555, 35, '#d37295'], ['other oilseeds', 756, 916, 555, 26, '#b07aa1'], ['Niger seed', 926, 1046, 567, 26, '#ff9d9a'],
  ['Guar seed', 1062, 1174, 567, 26, '#4e79a7'], ['Sannhamp', 1206, 1324, 570, 26, '#8cd17d'], ['Other Cereals', 601, 754, 597, 26, '#d37295'],
  ['Ragi', 767, 834, 612, 37, '#a0cbe8'], ['Mesta', 1083, 1154, 606, 26, '#499894'],
];

/* ---------- charts ---------- */
function SeasonChart() {
  const pts = (from: number, to: number) => seasonPoints.slice(from, to + 1).map((p) => p.join(',')).join(' ');
  return (
    <svg width="487" height="400" viewBox="223 264 487 400">
      <defs>
        <linearGradient id="low" gradientUnits="userSpaceOnUse" x1="0" y1="645" x2="0" y2="560">
          <stop offset="0" stopColor="#f4d16a" />
          <stop offset="0.55" stopColor="#f7b957" />
          <stop offset="0.85" stopColor="#f8a653" />
          <stop offset="1" stopColor="#f79f50" />
        </linearGradient>
        <linearGradient id="rice" gradientUnits="userSpaceOnUse" x1="0" y1="645" x2="0" y2="284">
          <stop offset="0" stopColor="#f0bd5a" />
          <stop offset="0.25" stopColor="#e8944f" />
          <stop offset="0.55" stopColor="#d56a4a" />
          <stop offset="0.75" stopColor="#c43c42" />
          <stop offset="1" stopColor="#b71d3e" />
        </linearGradient>
        <linearGradient id="wheat" gradientUnits="userSpaceOnUse" x1="0" y1="618" x2="0" y2="404">
          <stop offset="0" stopColor="#f5b957" />
          <stop offset="0.500" stopColor="#ea8350" />
          <stop offset="1" stopColor="#e35848" />
        </linearGradient>
        <linearGradient id="badge" x1="0" y1="0" x2="1" y2="1">
          <stop offset="0" stopColor="#b6b5b3" />
          <stop offset="1" stopColor="#989796" />
        </linearGradient>
      </defs>
      <rect x="223" y="264" width="487" height="400" fill="#f5ead9" />
      <path d="M223 644.500H710" stroke="#c3c4c8" strokeDasharray="2 1" />
      <g fill="none" strokeWidth="2.800" strokeLinejoin="round">
        <polyline points={pts(0, 41)} stroke="url(#low)" />
        <polyline points={pts(41, 43)} stroke="url(#rice)" />
        <polyline points={pts(43, 54)} stroke="url(#low)" />
        <polyline points={pts(54, 55)} stroke="url(#wheat)" />
      </g>
      {seasonPoints.map(([x, y], i) => (
        <circle key={i} cx={x} cy={y} r="2.900" fill={i === 42 ? '#b71d3e' : i === 55 ? '#e35848' : y < 600 ? '#f7a652' : y < 625 ? '#f6bd58' : '#f4cf66'} />
      ))}
      <g fontFamily={vizFont} fontSize="11" fontWeight="700" fill="#1c1c1c">
        {seasonLabels.map(([t, a, b, y]) => (
          <text key={t} x={a} y={y} textLength={b - a} lengthAdjust="spacingAndGlyphs">{t}</text>
        ))}
      </g>
      <rect x="653" y="640" width="52" height="19" rx="3" fill="url(#badge)" />
      <text x="662.500" y="654" fontFamily={vizFont} fontSize="13" fontWeight="700" fill="#fff" textLength="33.500" lengthAdjust="spacingAndGlyphs">1 null</text>
    </svg>
  );
}

const BubbleChart = () => (
  <svg width="475" height="186" viewBox="718 264 475 186">
    {bubbles.map(([x, y, r, c]) => <circle key={`${x}-${y}`} cx={x} cy={y} r={r} fill={c} />)}
    <g fontFamily={vizFont} fontSize="12" fontWeight="600" fill="#fdf3ee">
      <text x="892.300" y="390" textLength="37.400">Wheat</text>
      <text x="978.500" y="410" textLength="24">Rice</text>
      <text x="969" y="426" textLength="43">28.44%</text>
    </g>
  </svg>
);

const WordCloud = () => (
  <svg width="475" height="164" viewBox="9 135 1425 492" fontFamily={vizFont}>
    {words.map(([t, a, b, y, s, c]) => (
      <text key={t} x={a} y={y} fontSize={s} fontWeight={s < 40 ? 400 : 300} fill={c} textLength={b - a} lengthAdjust="spacingAndGlyphs">{t}</text>
    ))}
  </svg>
);

/* ---------- page parts ---------- */
const ToolbarRow = () => (
  <Toolbar>
    <Tool $ml={16} $w={17}><HomeIcon /></Tool>
    <ToolRule $ml={14} />
    <Tool $ml={14} $w={16}><Arrow /></Tool>
    <Tool $ml={16} $w={16} $dim><Arrow flip /></Tool>
    <Tool $ml={13} $w={19} $dim><RedoIcon /></Tool>
    <ToolCaret $ml={8} $dim />
    <Tool $ml={11} $w={17}><SaveIcon /></Tool>
    <Tool $ml={16} $w={16}><DbIcon mode="plus" /></Tool>
    <Tool $ml={15} $w={16}><DbIcon mode="pause" /></Tool>
    <ToolCaret $ml={8} />
    <Tool $ml={8} $w={18} $dim><RefreshIcon /></Tool>
    <ToolCaret $ml={9} $dim />
    <ToolRule $ml={10} />
    <Tool $ml={11} $w={20}><SheetIcon mark="plus" /></Tool>
    <ToolCaret $ml={7} />
    <Tool $ml={10} $w={18}><DuplicateIcon /></Tool>
    <Tool $ml={12} $w={20}><SheetIcon mark="clear" /></Tool>
    <ToolCaret $ml={7} />
    <ToolRule $ml={10} />
    <Tool $ml={13} $w={18} $dim><SwapIcon /></Tool>
    <Tool $ml={14} $w={19} $dim><SortIcon /></Tool>
    <Tool $ml={13} $w={19} $dim><SortIcon desc /></Tool>
    <ToolRule $ml={13} />
    <Tool $ml={16} $w={13}><PenIcon /></Tool>
    <ToolCaret $ml={8} />
    <Tool $ml={11} $w={13} $dim><ClipIcon /></Tool>
    <ToolCaret $ml={11} $dim />
    <Tool $ml={11} $w={17} $dim><TextBoxIcon /></Tool>
    <Tool $ml={14} $w={13} $dim><PinIcon /></Tool>
    <ToolSelect><ToolCaret $ml={90} $dim $big /></ToolSelect>
    <ToolRule $ml={15} />
    <Tool $ml={12} $w={21} $dim><FitIcon /></Tool>
    <ToolCaret $ml={4} $dim />
    <Tool $ml={11} $w={18}><PresentIcon /></Tool>
    <ToolRule $ml={14} />
    <Tool $ml={15} $w={15}><ShareIcon /></Tool>
    <Tool $ml={286} $w={19}><GuideIcon /></Tool>
    <ShowMe><ShowMeIcon /><Fit w={54}>Show Me</Fit></ShowMe>
  </Toolbar>
);

const LeftPane = () => (
  <Sidebar>
    <PaneTabs>
      <PaneTabActive><Fit w={68}>Dashboard</Fit></PaneTabActive>
      <PaneTab>
        <Fit w={41}>Layout</Fit>
        <svg width="7" height="10" viewBox="0 0 7 10" fill="none" stroke="#555" strokeWidth="1.200"><path d="M6 0.500L1 5L6 9.500" /></svg>
      </PaneTab>
    </PaneTabs>
    <PaneRow>
      <Pane>
        <Section $h={101}>
          <DeviceItem $on><Fit w={43}>Default</Fit></DeviceItem>
          <DeviceItem><Fit w={38}>Phone</Fit></DeviceItem>
          <PreviewButton><Fit w={83}>Device Preview</Fit></PreviewButton>
        </Section>
        <Section $h={73}>
          <Heading><Fit w={26}>Size</Fit></Heading>
          <SizeSelect>
            <Fit w={57}>Automatic</Fit>
            <ToolCaret $ml={0} $big />
          </SizeSelect>
        </Section>
        <Section $h={163}>
          <Heading><Fit w={43}>Sheets</Fit></Heading>
          <SheetClip>
            {sheets.map(([name, w, used]) => (
              <SheetItem key={name}><WorksheetIcon used={used} /><Fit w={w}>{name}</Fit></SheetItem>
            ))}
          </SheetClip>
        </Section>
        <ObjectsSection>
          <ObjectsHead><Heading $plain><Fit w={47}>Objects</Fit></Heading></ObjectsHead>
          <ObjectsBody>
            <ObjectList>
              {objects.map(([name, w]) => (
                <ObjectItem key={name}>
                  <svg width="14" height="13" viewBox="0 0 14 13" fill="none" stroke="#666" strokeWidth="1.100"><g transform="translate(1 0)">{objectPaths[name]}</g></svg>
                  <Fit w={w}>{name}</Fit>
                </ObjectItem>
              ))}
            </ObjectList>
            <Track $w={12}>
              <TrackEnd><svg width="8" height="4" viewBox="0 0 8 4"><path d="M0 4L4 0L8 4Z" fill="#a5a5a5" /></svg></TrackEnd>
              <Thumb $h={143} $c="#c1c1c1" />
              <TrackEnd $last><svg width="8" height="4" viewBox="0 0 8 4"><path d="M0 0L4 4L8 0Z" fill="#444" /></svg></TrackEnd>
            </Track>
          </ObjectsBody>
        </ObjectsSection>
      </Pane>
      <Track $w={15}>
        <TrackEnd><UpChevron /></TrackEnd>
        <Thumb $h={478} />
        <TrackEnd $last><DownChevron /></TrackEnd>
      </Track>
    </PaneRow>
  </Sidebar>
);

const Dashboard = () => (
  <Canvas>
    <Regions>
      {regions.map(([name, w, tw]) => (
        <Region key={name} $w={w}>
          <RegionTitle><Fit w={tw}>{name}</Fit></RegionTitle>
          <RegionValue $pr={name === 'East' ? 5 : 4}><Fit w={97}>326,242,956,201</Fit></RegionValue>
        </Region>
      ))}
    </Regions>
    <Zones>
      <SelectedZone>
        <ZoneTitle $h={46} $pr={5}><Fit w={287}>Season Based Cultivation Area</Fit></ZoneTitle>
        <SeasonChart />
        <GuideTop />
        <GuideSide />
      </SelectedZone>
      <ZoneColumn>
        <DashRule />
        <ZoneTitle $h={45} $pl={2}><Fit w={223}>Crop Plantation by Area</Fit></ZoneTitle>
        <Panel $bg="#fae9e1" $h={186} $mb={3}><BubbleChart /></Panel>
        <DashRule />
        <ZoneTitle $h={45} $pr={2}><Fit w={273}>Crops (Plantation by growth)</Fit></ZoneTitle>
        <Panel $bg="#f5ead9" $h={164}><WordCloud /></Panel>
      </ZoneColumn>
    </Zones>
  </Canvas>
);

const LegendPane = () => (
  <Legends>
    <LegendTitle><Fit w={26}>Area</Fit></LegendTitle>
    <Ramp>{ramp.map((c) => <RampStep key={c} $c={c} />)}</Ramp>
    <RampEnds><Fit w={65}>71,063,534</Fit><Fit w={33}>996M</Fit></RampEnds>
    <LegendTitle><Fit w={26}>Crop</Fit></LegendTitle>
    <CropLegend>
      <CropList>
        {crops.map(([name, c, w]) => <CropItem key={name}><Swatch $c={c} /><Fit w={w}>{name}</Fit></CropItem>)}
      </CropList>
      <Track $w={16}>
        <TrackEnd><UpChevron /></TrackEnd>
        <Thumb $h={191} />
        <TrackEnd $last><DownChevron /></TrackEnd>
      </Track>
    </CropLegend>
  </Legends>
);

const BottomTabs = () => (
  <SheetTabs>
    <SheetTab $w={131} $pl={10}>
      <svg width="9" height="12" viewBox="0 0 9 12" fill="none" stroke="#666"><rect x="0.500" y="0.700" width="7.500" height="10.300" rx="1.600" /><path d="M0.500 3.500H8" /></svg>
      <Fit w={68}>Data Source</Fit>
    </SheetTab>
    <SheetTab $w={68} $pl={0}><Clipped><Fit w={61}>production</Fit></Clipped></SheetTab>
    <SheetTab $w={57}><Fit w={42}>Sheet 9</Fit></SheetTab>
    <SheetTab $w={60}><Fit w={45}>Sheet 11</Fit></SheetTab>
    <SheetTab $w={62}><Fit w={47}>Sheet 12</Fit></SheetTab>
    <SheetTab $w={62}><Fit w={47}>Sheet 13</Fit></SheetTab>
    <SheetTab $w={63}><Fit w={47}>Sheet 14</Fit></SheetTab>
    <SheetTab $w={62}><Fit w={47}>Sheet 15</Fit></SheetTab>
    <SheetTab $w={63}><Fit w={47}>Sheet 16</Fit></SheetTab>
    <SheetTab $w={62}><Fit w={47}>Sheet 17</Fit></SheetTab>
    <SheetTab $w={63}><Fit w={47}>Sheet 18</Fit></SheetTab>
    <SheetTab $w={63}><Fit w={47}>Sheet 19</Fit></SheetTab>
    <SheetTab $w={102} $pl={7} $gap={4}><ColumnsIcon /><Fit w={69}>Dashboard 1</Fit></SheetTab>
    <SheetTab $w={103} $pl={6} $on><ColumnsIcon /><Fit w={73}>Dashboard 2</Fit></SheetTab>
    <SheetTab $w={105} $pl={7} $gap={4}><ColumnsIcon /><Fit w={71}>Dashboard 3</Fit></SheetTab>
    <SheetTab $w={71} $pl={7} $gap={4}><BookIcon /><Fit w={38}>Story 1</Fit></SheetTab>
    <SheetTab $w={73} $pl={7} $gap={4}><BookIcon /><Fit w={40}>Story 2</Fit></SheetTab>
    <SheetTab $w={32} $pl={9}><NewTabIcon d="M9 11.400H0.600V1H11.400V8M3.500 9V6.500M5.700 9V4.500M8 9V5.500" /></SheetTab>
    <SheetTab $w={32} $pl={8}><NewTabIcon d="M9 11.400H0.600V1H11.400V8M0.600 6H11.400M6 1V11.400" /></SheetTab>
    <SheetTab $w={32} $pl={8}><NewTabIcon d="M6 2.500C5 1.200 2.500 1 0.700 1.500V10.500C2.500 10.200 5 10.500 6 12V2.500C7 1.200 9.500 1 11.400 1.500V8" /></SheetTab>
  </SheetTabs>
);

const Status = () => (
  <StatusBar>
    <StatusCell $w={127} /><StatusCell $w={27} /><StatusCell $w={27} /><StatusCell $w={47} />
    <StatusCell $w={71} $pl={8} $gap={11}>
      <svg width="56" height="8" viewBox="0 0 56 8" fill="#555">
        <path d="M0 0.500H1.300V7.500H0ZM6.500 0.500V7.500L2 4ZM21 0.500V7.500L16.500 4ZM33 0.500V7.500L37.500 4ZM48.500 0.500V7.500L53 4ZM53.500 0.500H54.800V7.500H53.500Z" />
      </svg>
    </StatusCell>
    <StatusCell $w={68} $pl={8} $gap={10}>
      <svg width="11" height="11" viewBox="0 0 11 11" fill="#bdbdbd"><path d="M0 0H3V3H0ZM4 0H7V3H4ZM8 0H11V3H8ZM0 4H3V7H0ZM4 4H7V7H4ZM8 4H11V7H8ZM0 8H3V11H0ZM4 8H7V11H4ZM8 8H11V11H8Z" /></svg>
      <svg width="11" height="11" viewBox="0 0 11 11" fill="#bdbdbd"><path d="M0 0H11V7H0ZM0 8H3V11H0ZM4 8H7V11H4ZM8 8H11V11H8Z" /></svg>
      <svg width="11" height="11" viewBox="0 0 11 11"><rect width="11" height="11" fill="#666" /></svg>
    </StatusCell>
  </StatusBar>
);

const DesktopTaskbar = () => (
  <Taskbar>
    <StartButton>
      <svg width="17" height="17" viewBox="0 0 17 17" fill="#fff"><path d="M0 2.400L7.200 1.400V8H0ZM8.200 1.300L17 0V8H8.200ZM0 9H7.200V15.600L0 14.600ZM8.200 9H17V17L8.200 15.700Z" /></svg>
    </StartButton>
    <SearchBox>
      <svg width="22" height="22" viewBox="0 0 22 22"><circle cx="11" cy="11" r="9.200" fill="none" stroke="#111" strokeWidth="2.800" /></svg>
      <SearchText><Fit w={128}>Type here to search</Fit></SearchText>
      <svg width="12" height="17" viewBox="0 0 12 17" fill="none" stroke="#333" strokeWidth="1.200"><rect x="3.500" y="0.700" width="5" height="10" rx="2" /><path d="M1 8V10C1 14.500 11 14.500 11 10V8M6 13.500V16M4 16.200H8" /></svg>
    </SearchBox>
    <TaskButton $w={47}>
      <svg width="18" height="17" viewBox="0 0 18 17" fill="none" stroke="#fff" strokeWidth="1.300"><path d="M2 0V2.500H11V0M2 17V14.500H11V17M2 5H11V12H2ZM15 0V3.500M15 8V17" /><rect x="13.800" y="4.500" width="2.600" height="2.600" fill="#fff" stroke="none" /></svg>
    </TaskButton>
    <TaskButton $w={56}>
      <svg width="24" height="24" viewBox="0 0 24 24">
        <circle cx="12" cy="12" r="12" fill="#fdd03c" />
        <path d="M12 12L1.600 6A12 12 0 0 1 22.400 6H12Z" fill="#df4437" />
        <path d="M1.600 6A12 12 0 0 0 11.500 24L17 15L12 12Z" fill="#1da462" />
        <path d="M22.400 6H12L17.200 15L11.500 24A12 12 0 0 0 22.400 6Z" fill="#fdd03c" />
        <circle cx="12" cy="12" r="5.600" fill="#fff" /><circle cx="12" cy="12" r="4.400" fill="#3f7ff0" />
      </svg>
    </TaskButton>
    <TaskButton $w={42}>
      <svg width="21" height="22" viewBox="0 0 21 22"><path d="M0 10C1 4 5.500 0 11 0C17 0 20.500 4.500 20.500 9.500V13H6.800C7 16.500 10 18 13 18C15.500 18 17.500 17.400 19 16.500V20.300C17 21.400 14.500 22 12 22C6 22 2.500 18.500 2.500 14C2.500 10.500 4.500 7.800 7.500 6.300C4.500 6.500 1.800 7.500 0 10ZM7 9.300H14.500C14.500 6.800 13.300 5.500 11 5.500C8.800 5.500 7.400 7 7 9.300Z" fill="#0a7ad8" /></svg>
    </TaskButton>
    <TaskButton $w={56} $open>
      <svg width="22" height="19" viewBox="0 0 22 19"><path d="M0 1H8L9.500 3H22V18H0Z" fill="#fcd56e" /><path d="M0 4.500H22V18H0Z" fill="#fde495" /><path d="M4 19V10.500H18V19H14.500V14H7.500V19Z" fill="#3fa9e0" /></svg>
    </TaskButton>
    <TaskButton $w={42}>
      <svg width="24" height="20" viewBox="0 0 24 20"><path d="M0 7.500L12 0L24 7.500V19.500H0Z" fill="#fff" /><path d="M2.500 7H21.500L14 11.500L16 16.500L12 12.700Z" fill="#18242b" /></svg>
    </TaskButton>
    <TaskButton $w={56}>
      <svg width="24" height="24" viewBox="0 0 24 24" fill="none" stroke="#fff"><rect width="24" height="24" rx="5" fill="#248cf0" stroke="none" /><circle cx="12" cy="12" r="10" strokeWidth="0.600" opacity="0.600" /><circle cx="12" cy="13" r="5.500" strokeWidth="1.500" /><g fill="#fff" stroke="#248cf0" strokeWidth="0.800"><circle cx="12" cy="6.500" r="3" /><circle cx="6.500" cy="15.500" r="3" /><circle cx="17.500" cy="15.500" r="3" /></g></svg>
    </TaskButton>
    <TaskButton $w={42}>
      <svg width="22" height="22" viewBox="0 0 22 22"><path d="M1 16.500H21L22 22H0Z" fill="#f07c1c" /><path d="M11 0H12L16.800 17C14 19.300 8 19.300 5.200 17L10 0Z" fill="#f58220" /><path d="M8.800 4.500H13.200L14.300 8.500H7.700ZM6.700 12H15.300L16.200 15C14 16.500 8 16.500 5.800 15Z" fill="#f1f1f1" /></svg>
    </TaskButton>
    <TaskButton $w={56}>
      <svg width="24" height="20" viewBox="0 0 24 20"><path d="M0 3H6L7.500 0.500H16L17.500 3H24V19.500H0Z" fill="#fff" /><circle cx="12" cy="11" r="6.300" fill="#302f2e" /><path d="M13 6A5.200 5.200 0 0 1 14.500 15.500" stroke="#fff" fill="none" strokeWidth="1.300" /><path d="M20 4.500H22V6H20Z" fill="#302f2e" /></svg>
    </TaskButton>
    <TaskButton $w={42}>
      <svg width="25" height="23" viewBox="0 0 25 23">
        <path d="M5 5L11 1L20 0.500L23.500 3L24 15L22 21L15 22.500H4L1 19L4 13Z" fill="#6d5f50" />
        <path d="M10 3L21 2L23 7L11 8Z" fill="#20262e" />
        <path d="M9 8L23 7.500L24 17L20 22L12 21L9 16Z" fill="#55606e" />
        <path d="M12 11.500H21V15.500H12ZM4 8L7 6L7.500 15L4 16Z" fill="#12161b" />
        <path d="M10 17L14 18.500M20 18.500L23.500 17" stroke="#dfe9f5" strokeWidth="1.600" />
        <path d="M12 9.500H21M9 3L14 1" stroke="#a9b5c4" />
        <circle cx="4.500" cy="20" r="2" fill="#e8b56a" />
        <circle cx="9" cy="20.500" r="1.400" fill="#fbeed6" />
      </svg>
    </TaskButton>
    <TaskSpacer />
    <TaskButton $w={48} $on><TableauMark size={22} /></TaskButton>
    <Tray>
      <TrayItem $ml={0} $w={15}>
        <Svg w={15} h={16}><circle cx="10.500" cy="4" r="3" /><circle cx="4.500" cy="7.800" r="2.600" /><path d="M0.600 15C1 10 8.500 10 8.500 15M8 8.200C11 7 13.800 8.500 14.200 11.500" /></Svg>
      </TrayItem>
      <TrayItem $ml={23} $w={12}><Svg w={12} h={8}><path d="M0.700 7L6 1.500L11.300 7" strokeWidth="1.400" /></Svg></TrayItem>
      <TrayItem $ml={11} $w={16}><Svg w={16} h={10}><path d="M0.700 0.700H13.300V9.300H0.700ZM14.700 3V7" /><path d="M2.500 2.500H4.500V7.500H2.500Z" fill="#fff" stroke="none" /></Svg></TrayItem>
      <TrayItem $ml={7} $w={16}>
        <Svg w={16} h={15}><g stroke="#8d8d8d"><path d="M3 9C4 4 8 1 15 1M6 11C7 7.500 10 4.800 15 4.500M9.500 13C10 10.500 12 8.500 15 8.200" /></g><circle cx="13" cy="13" r="1.500" fill="#aaa" stroke="none" /><circle cx="5" cy="10" r="4.600" fill="#d9202a" stroke="none" /><path d="M3.200 8.200L6.800 11.800M6.800 8.200L3.200 11.800" /></Svg>
      </TrayItem>
      <TrayItem $ml={8} $w={17}><Svg w={17} h={14}><path d="M0.700 4.500H3L6.500 1V13L3 9.500H0.700ZM9 4.500C10.300 6 10.300 8 9 9.500M11.500 2.800C13.600 5.500 13.600 8.500 11.500 11.200" /><path d="M13.800 1C17 5 17 9 13.800 13" stroke="#8d8d8d" /></Svg></TrayItem>
      <TrayItem $ml={9} $w={23}><Fit w={23}>ENG</Fit></TrayItem>
      <Clock><Fit w={27}>19:13</Fit><Fit w={58}>13-10-2023</Fit></Clock>
      <TrayItem $ml={18} $w={25}>
        <svg width="25" height="25" viewBox="0 0 25 25"><path d="M0 0H16V13H6L3 16V13H0Z" fill="#fff" /><path d="M2.500 3.500H13.500M2.500 6.500H13.500M2.500 9.500H9" stroke="#2f2e2d" strokeWidth="1.200" /><circle cx="15.500" cy="15.500" r="8.600" fill="#2f2e2d" stroke="#aaa" strokeWidth="0.900" /><text x="15.500" y="19.700" textAnchor="middle" fontFamily={winFont} fontSize="11.500" fontWeight="600" fill="#fff">14</text></svg>
      </TrayItem>
      <DesktopEdge />
    </Tray>
  </Taskbar>
);

const TaskSpacer = styled.i`
  width: 4px;
  flex: none;
`;

export default function App() {
  return (
    <Page>
      <GlobalStyle />
      <TitleBar>
        <TitleMark />
        <TitleText><Fit w={314}>Tableau - Book1 [Recovered] - Tableau license expires today</Fit></TitleText>
        <WindowButtons>
          <svg width="11" height="11" viewBox="0 0 11 11"><path d="M0 5.500H10" stroke="#000" /></svg>
          <svg width="11" height="11" viewBox="0 0 11 11" fill="none" stroke="#000"><path d="M0.500 2.500H8.500V10.500H0.500ZM2.500 2.500V0.500H10.500V8.500H8.500" /></svg>
          <svg width="11" height="11" viewBox="0 0 11 11"><path d="M0.500 0.500L10.500 10.500M10.500 0.500L0.500 10.500" stroke="#000" strokeWidth="1.100" /></svg>
        </WindowButtons>
      </TitleBar>
      <MenuBar>{menus.map(([m, w]) => <Fit key={m} w={w}>{m}</Fit>)}</MenuBar>
      <ToolbarRow />
      <Body>
        <LeftPane />
        <Dashboard />
        <LegendPane />
      </Body>
      <BottomTabs />
      <Status />
      <DesktopTaskbar />
    </Page>
  );
}
